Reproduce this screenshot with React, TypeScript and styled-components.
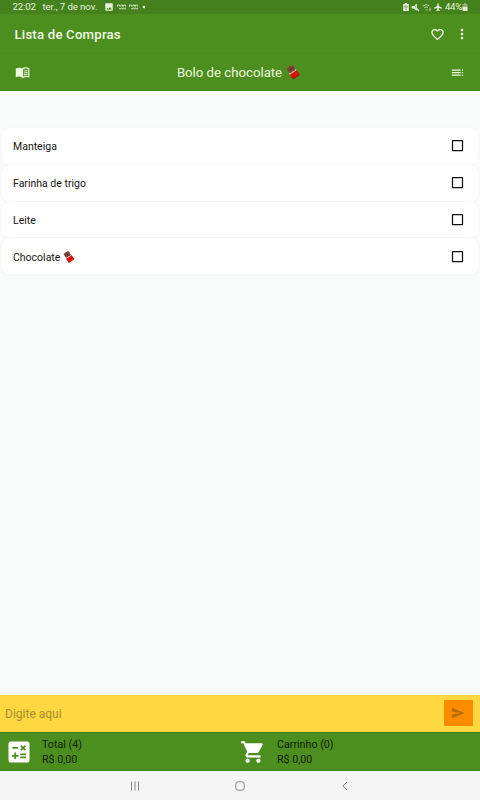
import React from 'react';
import styled, { createGlobalStyle } from 'styled-components';
import {
  MdCalculate, MdCheckBoxOutlineBlank, MdFavoriteBorder, MdImage,
  MdMoreVert, MdSend, MdShoppingCart, MdToc,
} from 'react-icons/md';

const GlobalStyle = createGlobalStyle`
  * { box-sizing: border-box; }
  body { margin: 0; background: #f9fbfa; }
  svg { display: block; flex: none; }
`;

const Screen = styled.div`
  width: 480px;
  height: 800px;
  display: flex;
  flex-direction: column;
  overflow: hidden;
  background: #f9fbfa;
  font-family: Roboto, sans-serif;
  color: #151515;
`;

const StatusBar = styled.div`
  height: 14px;
  flex: none;
  display: flex;
  align-items: center;
  padding: 0 12px 0 12.5px;
  background: #45821d;
  color: #e6f0d8;
  font-size: 9.7px;
  line-height: 14px;
  white-space: nowrap;
`;

const Clock = styled.span`
  width: 30px;
  letter-spacing: -0.2px;
`;

const DateLabel = styled.span`
  width: 61px;
  letter-spacing: -0.1px;
`;

const StatusGroup = styled.div<{ $gap: number; $end?: boolean }>`
  display: flex;
  align-items: center;
  gap: ${p => p.$gap}px;
  margin-left: ${p => (p.$end ? 'auto' : '0')};
`;

const Battery = styled.span`
  display: flex;
  align-items: center;
  margin-left: 1px;
  letter-spacing: -0.3px;
`;

const AppBar = styled.header`
  height: 39px;
  flex: none;
  display: flex;
  align-items: center;
  padding: 1px 10px 0 14.5px;
  background: #4c8f1e;
  color: #f3fae6;
`;

const AppTitle = styled.h1`
  flex: 1;
  margin: 0;
  font-size: 13.2px;
  font-weight: 500;
  letter-spacing: 0.2px;
`;

const Actions = styled.div`
  display: flex;
  align-items: center;
  gap: 9.5px;
`;

const ListBar = styled.div`
  height: 38px;
  flex: none;
  display: grid;
  grid-template-columns: 40px 1fr 40px;
  align-items: center;
  padding: 0 15px;
  background: #4c8f1e;
  border-top: 1px solid #498b1d;
  border-bottom: 1px solid #41811a;
  color: #edf8df;
`;

const ListTitle = styled.h2`
  display: flex;
  align-items: center;
  justify-content: center;
  gap: 4px;
  margin: 0;
  padding-right: 3px;
  font-size: 13.2px;
  font-weight: 400;
`;

const EndSlot = styled.div`
  display: flex;
  justify-content: flex-end;
`;

const Items = styled.main`
  flex: 1;
  padding: 37px 2px 0;
`;

const Item = styled.div`
  height: 36.75px;
  display: flex;
  align-items: center;
  justify-content: space-between;
  padding: 0 13px 0 11px;
  background: #fff;
  border-radius: 7px;
  box-shadow: inset 0 -1px 0 #f8f9f9, 0 0 1px #e6e9e8;
`;

const ItemName = styled.span`
  display: flex;
  align-items: center;
  gap: 3px;
  padding-top: 1px;
  font-size: 10.5px;
`;

const CheckSlot = styled.span`
  padding-bottom: 1px;
`;

const Entry = styled.div`
  height: 37px;
  flex: none;
  display: flex;
  align-items: center;
  justify-content: space-between;
  padding: 0 7.5px 0 5px;
  background: #ffd740;
  color: #a58d34;
  font-size: 12px;
`;

const SendButton = styled.div`
  width: 28.5px;
  height: 26px;
  display: grid;
  place-items: center;
  margin-bottom: 1px;
  background: #ff8c00;
  border-radius: 1px;
  color: #b96a08;
`;

const Totals = styled.footer`
  height: 39px;
  flex: none;
  display: grid;
  grid-template-columns: 235px 1fr;
  background: #4c8f1e;
  border-top: 1px solid #458519;
  border-bottom: 1px solid #458519;
`;

const Total = styled.div`
  display: grid;
  grid-template-columns: 37.5px 1fr;
  align-items: center;
  padding-left: 4.5px;
  color: #fff;
`;

const TotalText = styled.div`
  padding-top: 2px;
  color: #10200a;
  font-size: 10.7px;
  line-height: 14.5px;
`;

const NavBar = styled.nav`
  height: 29px;
  flex: none;
  display: grid;
  grid-template-columns: repeat(3, 105px);
  justify-content: center;
  justify-items: center;
  align-items: center;
  background: #f5f5f5;
  color: #858585;
`;

const ChocolateBar = ({ size }: { size: number }) => (
  <svg width={size} height={size} viewBox="0 0 16 16">
    <g transform="rotate(-34 8 8)">
      <rect x="4" y="0.7" width="8" height="8" fill="#804536" />
      <path d="M8 1v6M4 4h8" stroke="#5f3029" strokeWidth=".8" />
      <rect x="3.3" y="8" width="9.4" height="7" rx=".5" fill="#d9120c" />
      <path d="M3.3 6.7l2.2 1 2.2-.7 2 .8 3-1v1.7H3.3z" fill="#d9cbbb" />
      <path d="M3.3 14h9.4v1H3.3z" fill="#a50d0a" />
    </g>
  </svg>
);

const OpenBook = () => (
  <svg width="15" height="15" viewBox="0 0 24 24" fill="none" stroke="currentColor">
    <path d="M12 5.8C9 4 5 4 1.2 5.5v14C5 18 9 18 12 20z" fill="currentColor" stroke="none" />
    <path d="M12 6.2c3-1.8 6.5-1.8 10-.4v13c-3.5-1-7-.8-10 1z" strokeWidth="2" />
    <path d="M14.5 9.8q3-1.1 5.5-.5M14.5 12.7q3-1.1 5.5-.5M14.5 15.6q3-1.1 5.5-.5" strokeWidth="1.6" />
  </svg>
);

const GameBadge = () => (
  <svg width="9" height="6" viewBox="0 0 9 6" fill="none" stroke="#c9dcb8" strokeWidth="1">
    <path d="M.5 2.8V1h2v1.2h1M4 2.5V1h1.5v1.3h1V1h2v1.6M2 4.7h2M4.7 3.5v1.3h1.6V3.5M7 4.8h1.5V3.5" />
  </svg>
);

const BatterySaver = () => (
  <svg width="6" height="8" viewBox="0 0 6 8">
    <path d="M1.8 0h2.4v1H5.8v7H.2V1h1.6z" fill="#e6f0d8" />
    <path d="M1.8 3h2.4v1.3L3 5.2l-1.2-.9zM2 6.3h2" fill="none" stroke="#45821d" strokeWidth=".6" />
  </svg>
);

const MutedSpeaker = () => (
  <svg width="9" height="9" viewBox="0 0 9 9">
    <path d="M.7 3h2L5.8.6v7.2L2.7 5.6h-2z" fill="#e6f0d8" />
    <path d="M1.2 0l7 8" stroke="#45821d" strokeWidth=".8" />
    <path d="M5 4.4l3 3.8" stroke="#e6f0d8" strokeWidth="1.2" />
  </svg>
);

const WifiTransfer = () => (
  <svg width="10" height="9" viewBox="0 0 10 9" fill="none" stroke="#b7cfa5">
    <path d="M.8 3Q4 .2 7.5 3M2.2 4.7Q4 3.1 6 4.7M3.5 6.2l1 1 1-1" />
    <path d="M8 4.5v3M7 6.5l1 1 1-1" strokeWidth=".9" />
  </svg>
);

const Airplane = () => (
  <svg width="8" height="8" viewBox="0 0 8 8" fill="#e6f0d8">
    <path d="M3.3.9Q4-.3 4.7.9V3L8 4.7v1L4.7 5v1.3l1.1.9V8L4 7.5 2.2 8v-.8l1.1-.9V5L0 5.7v-1L3.3 3z" />
  </svg>
);

const BatteryLevel = () => (
  <svg width="6" height="8" viewBox="0 0 6 8">
    <path d="M2 0h2v1h1.5v3h-5V1H2z" fill="#91b276" />
    <path d="M.5 4h5v4h-5z" fill="#e6f0d8" />
  </svg>
);

const items = [
  { name: 'Manteiga' },
  { name: 'Farinha de trigo' },
  { name: 'Leite' },
  { name: 'Chocolate', chocolate: true },
];

export default function App() {
  return (
    <>
      <GlobalStyle />
      <Screen>
        <StatusBar>
          <Clock>22:02</Clock>
          <DateLabel>ter., 7 de nov.</DateLabel>
          <StatusGroup $gap={3}>
            <MdImage size={10} />
            <GameBadge />
            <GameBadge />
            <svg width="4" height="4" viewBox="0 0 4 4"><circle cx="3" cy="2" r="1.3" fill="#e6f0d8" /></svg>
          </StatusGroup>
          <StatusGroup $gap={2} $end>
            <BatterySaver />
            <MutedSpeaker />
            <WifiTransfer />
            <Airplane />
            <Battery>44%<BatteryLevel /></Battery>
          </StatusGroup>
        </StatusBar>
        <AppBar>
          <AppTitle>Lista de Compras</AppTitle>
          <Actions>
            <MdFavoriteBorder size={15} />
            <MdMoreVert size={16} />
          </Actions>
        </AppBar>
        <ListBar>
          <OpenBook />
          <ListTitle>Bolo de chocolate <ChocolateBar size={14} /></ListTitle>
          <EndSlot><MdToc size={15} /></EndSlot>
        </ListBar>
        <Items>
          {items.map(item => (
            <Item key={item.name}>
              <ItemName>{item.name}{item.chocolate && <ChocolateBar size={11.5} />}</ItemName>
              <CheckSlot><MdCheckBoxOutlineBlank size={15} color="#111" /></CheckSlot>
            </Item>
          ))}
        </Items>
        <Entry>
          Digite aqui
          <SendButton><MdSend size={14} /></SendButton>
        </Entry>
        <Totals>
          <Total>
            <MdCalculate size={28} />
            <TotalText>Total (4)<br />R$ 0,00</TotalText>
          </Total>
          <Total>
            <MdShoppingCart size={26} />
            <TotalText>Carrinho (0)<br />R$ 0,00</TotalText>
          </Total>
        </Totals>
        <NavBar>
          <svg width="10" height="10" viewBox="0 0 10 10" stroke="currentColor"><path d="M1.5 .5v9M5 .5v9M8.5 .5v9" /></svg>
          <svg width="10" height="10" viewBox="0 0 10 10" fill="none" stroke="currentColor"><rect x=".8" y=".8" width="8.4" height="8.4" rx="2.4" /></svg>
          <svg width="10" height="10" viewBox="0 0 10 10" fill="none" stroke="currentColor"><path d="M7 1L2.8 5 7 9" /></svg>
        </NavBar>
      </Screen>
    </>
  );
}
